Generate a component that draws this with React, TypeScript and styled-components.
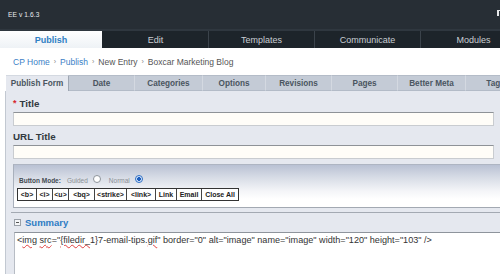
import React from "react";
import styled, { createGlobalStyle } from "styled-components";

const Global = createGlobalStyle`
  html, body { margin: 0; padding: 0; background: #fff; }
  body { width: 500px; height: 274px; overflow: hidden; font-family: "Liberation Sans", Arial, sans-serif; }
`;

const Page = styled.div`
  width: 500px;
  height: 274px;
  overflow: hidden;
  display: flex;
  flex-direction: column;
`;

const TopBar = styled.div`
  height: 29px;
  background: #272e35;
  border-bottom: 2px solid #2f373f;
  display: flex;
  align-items: center;
  justify-content: space-between;
  padding: 0 0 0 8px;
  color: #e8ecef;
  font-size: 6.6px;
  flex-shrink: 0;
`;

const Version = styled.span`
  letter-spacing: 0.1px;
`;

const Corner = styled.span`
  width: 3px;
  height: 6px;
  margin-top: -3px;
  border-left: 2px solid #e6e8ea;
  border-top: 1px solid #e6e8ea;
  box-sizing: border-box;
`;

const Nav = styled.div`
  height: 17px;
  display: flex;
  background: #1d242a;
  flex-shrink: 0;
`;

const NavTab = styled.div<{ $active?: boolean; $w: number }>`
  width: ${(p) => p.$w}px;
  flex-shrink: 0;
  display: flex;
  align-items: center;
  justify-content: center;
  font-size: 9px;
  color: ${(p) => (p.$active ? "#2f7fc4" : "#c9ced3")};
  font-weight: ${(p) => (p.$active ? "bold" : "normal")};
  background: ${(p) => (p.$active ? "linear-gradient(#ffffff, #eef2f6)" : "#1d242a")};
  border-right: 1px solid ${(p) => (p.$active ? "#1d242a" : "#3b434b")};
  box-sizing: border-box;
`;

const Crumbs = styled.div`
  height: 27px;
  display: flex;
  align-items: center;
  padding-left: 13px;
  font-size: 8.5px;
  color: #555;
  gap: 4px;
  flex-shrink: 0;
`;

const Crumb = styled.span<{ $link?: boolean }>`
  color: ${(p) => (p.$link ? "#3b80c6" : "#555")};
`;

const Sep = styled.span`
  color: #888;
  font-size: 7px;
`;

const Tabs = styled.div`
  display: flex;
  height: 16px;
  margin-left: 6px;
  flex-shrink: 0;
`;

const Tab = styled.div<{ $active?: boolean; $w: number }>`
  width: ${(p) => p.$w}px;
  flex-shrink: 0;
  box-sizing: border-box;
  display: flex;
  align-items: center;
  justify-content: center;
  font-size: 8.2px;
  font-weight: bold;
  color: #4a5560;
  white-space: nowrap;
  background: ${(p) => (p.$active ? "#e5e8ef" : "#c4cbd6")};
  border-top: 1px solid ${(p) => (p.$active ? "#d4d9e1" : "#b4bcc8")};
  border-right: 1px solid ${(p) => (p.$active ? "#9fa7b3" : "#d4d9e1")};
  ${(p) => (p.$active ? "" : "border-bottom: 1px solid #b3bbc7;")}
`;

const Panel = styled.div`
  flex: 1;
  margin-left: 5px;
  border-left: 1px solid #c2c8d1;
  background: #e5e8ef;
  display: flex;
  flex-direction: column;
  padding: 3px 0 0 7px;
`;

const Label = styled.div`
  font-size: 9.8px;
  font-weight: bold;
  color: #333a41;
  height: 18px;
  box-sizing: border-box;
  padding-bottom: 3px;
  display: flex;
  align-items: flex-end;
  gap: 3px;
`;

const Star = styled.span`
  color: #d7262b;
  font-size: 9px;
  align-self: flex-start;
  margin-top: 4px;
`;

const Input = styled.div`
  height: 14px;
  width: 481px;
  box-sizing: border-box;
  background: #fffdf8;
  border: 1px solid #c9ccd0;
  border-top: 1px solid #8e9297;
  margin-bottom: 1px;
`;

const FormatBox = styled.div`
  margin-top: 4px;
  height: 44px;
  box-sizing: border-box;
  border-left: 1px solid #a9b0bc;
  border-top: 1px solid #aeb5c2;
  border-bottom: 1px solid #a3a9b2;
  background: linear-gradient(#b9c1d3 0px, #d6dbe5 12px, #f4f5f8 26px, #ffffff 34px);
  padding: 10px 0 0 3px;
  display: flex;
  flex-direction: column;
  gap: 3px;
`;

const ModeRow = styled.div`
  display: flex;
  align-items: center;
  font-size: 6.5px;
  color: #8a8f95;
  gap: 3px;
  padding-left: 2px;
  height: 10px;
`;

const ModeLabel = styled.span`
  font-weight: bold;
  color: #444b52;
  margin-right: 3px;
`;

const Radio = styled.span<{ $checked?: boolean }>`
  width: 8px;
  height: 8px;
  border-radius: 50%;
  box-sizing: border-box;
  border: 1px solid ${(p) => (p.$checked ? "#2f6fc4" : "#8d939a")};
  background: ${(p) => (p.$checked ? "radial-gradient(#1d5fbf 0 1.6px, #dbe8fb 2.2px)" : "#fff")};
  margin: 0 5px 2px 2px;
  display: inline-block;
`;

const Buttons = styled.div`
  display: flex;
  background: #fff;
  align-self: flex-start;
  border: 1px solid #333;
  height: 13px;
  box-sizing: border-box;
`;

const Btn = styled.div<{ $w: number }>`
  width: ${(p) => p.$w}px;
  box-sizing: border-box;
  border-right: 1px solid #444;
  font-size: 7px;
  font-weight: bold;
  color: #222;
  display: flex;
  align-items: center;
  justify-content: center;
  &:last-child { border-right: none; }
`;

const SummaryHead = styled.div`
  margin-top: 4px;
  margin-left: -2px;
  border-top: 1px solid #a3a9b2;
  height: 19px;
  display: flex;
  align-items: center;
  gap: 4px;
  padding-left: 3px;
  font-size: 9.5px;
  font-weight: bold;
  color: #2d7cc4;
`;

const Toggle = styled.span`
  width: 7px;
  height: 7px;
  box-sizing: border-box;
  border: 1px solid #9aa0a8;
  background: #f4f5f7;
  display: flex;
  align-items: center;
  justify-content: center;
  &::after {
    content: "";
    width: 3px;
    height: 1px;
    background: #555;
  }
`;

const TextArea = styled.div`
  flex: 1;
  margin-left: 1px;
  background: #fff;
  border-top: 1px solid #8e949c;
  border-left: 1px solid #b7bcc4;
  padding: 2px 0 0 2px;
  font-size: 9.1px;
  color: #333;
  white-space: nowrap;
`;

const Spell = styled.span`
  text-decoration: underline wavy #e04040;
  text-decoration-thickness: 1px;
  text-underline-offset: 1px;
`;

const navTabs = [
  { t: "Publish", w: 103, a: true },
  { t: "Edit", w: 106 },
  { t: "Templates", w: 106 },
  { t: "Communicate", w: 106 },
  { t: "Modules", w: 106 },
];

const formTabs = [
  { t: "Publish Form", w: 63, a: true },
  { t: "Date", w: 66 },
  { t: "Categories", w: 68 },
  { t: "Options", w: 63 },
  { t: "Revisions", w: 66 },
  { t: "Pages", w: 66 },
  { t: "Better Meta", w: 68 },
  { t: "Tags", w: 60 },
];

const buttons = [
  { t: "<b>", w: 19 },
  { t: "<i>", w: 16 },
  { t: "<u>", w: 16 },
  { t: "<bq>", w: 26 },
  { t: "<strike>", w: 32 },
  { t: "<link>", w: 29 },
  { t: "Link", w: 21 },
  { t: "Email", w: 25 },
  { t: "Close All", w: 36 },
];

export default function App() {
  return (
    <Page>
      <Global />
      <TopBar>
        <Version>EE v 1.6.3</Version>
        <Corner />
      </TopBar>
      <Nav>
        {navTabs.map((n) => (
          <NavTab key={n.t} $w={n.w} $active={n.a}>
            {n.t}
          </NavTab>
        ))}
      </Nav>
      <Crumbs>
        <Crumb $link>CP Home</Crumb>
        <Sep>›</Sep>
        <Crumb $link>Publish</Crumb>
        <Sep>›</Sep>
        <Crumb>New Entry</Crumb>
        <Sep>›</Sep>
        <Crumb>Boxcar Marketing Blog</Crumb>
      </Crumbs>
      <Tabs>
        {formTabs.map((t) => (
          <Tab key={t.t} $w={t.w} $active={t.a}>
            {t.t}
          </Tab>
        ))}
      </Tabs>
      <Panel>
        <Label>
          <Star>*</Star> Title
        </Label>
        <Input />
        <Label>URL Title</Label>
        <Input />
        <FormatBox>
          <ModeRow>
            <ModeLabel>Button Mode:</ModeLabel>
            Guided <Radio />
            Normal <Radio $checked />
          </ModeRow>
          <Buttons>
            {buttons.map((b) => (
              <Btn key={b.t} $w={b.w}>
                {b.t}
              </Btn>
            ))}
          </Buttons>
        </FormatBox>
        <SummaryHead>
          <Toggle />
          Summary
        </SummaryHead>
        <TextArea>
          {"<"}<Spell>img</Spell> <Spell>src</Spell>{"=\""}<Spell>{"{filedir_"}</Spell>{"1}7-email-tips."}<Spell>gif</Spell>{"\" border=\"0\" alt=\"image\" name=\"image\" width=\"120\" height=\"103\" />"}
        </TextArea>
      </Panel>
    </Page>
  );
}
